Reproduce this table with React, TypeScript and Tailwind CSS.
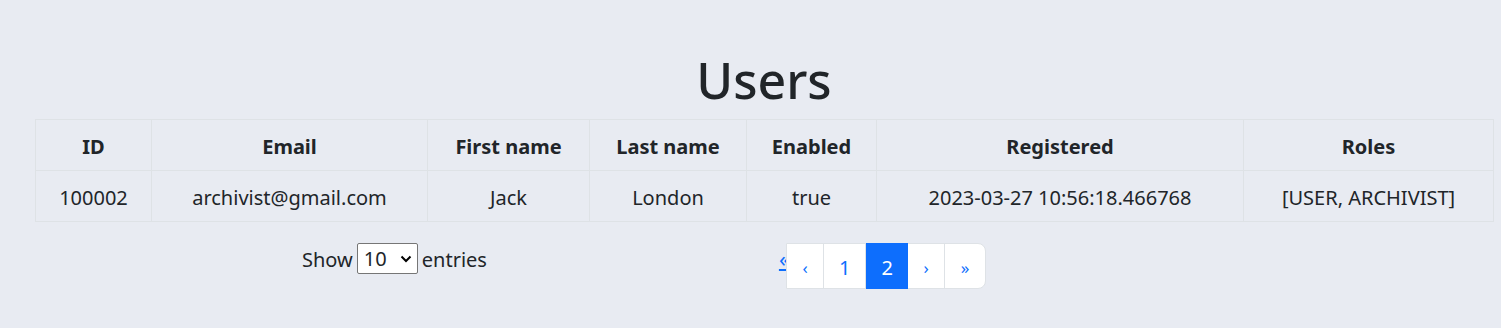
import React from 'react';

interface User {
  id: number;
  email: string;
  firstName: string;
  lastName: string;
  enabled: boolean;
  registered: string;
  roles: string[];
}

const columns = [
  { label: 'ID', width: 'w-[116px]' },
  { label: 'Email', width: 'w-[276px]' },
  { label: 'First name', width: 'w-[162px]' },
  { label: 'Last name', width: 'w-[157px]' },
  { label: 'Enabled', width: 'w-[130px]' },
  { label: 'Registered', width: 'w-[367px]' },
  { label: 'Roles', width: 'w-[250px]' },
];

const users: User[] = [
  {
    id: 100002,
    email: 'archivist@gmail.com',
    firstName: 'Jack',
    lastName: 'London',
    enabled: true,
    registered: '2023-03-27 10:56:18.466768',
    roles: ['USER', 'ARCHIVIST'],
  },
];

const cell = 'border border-[#dee2e6] px-[10px] pt-[12px] pb-[8px] text-center';

function Pagination() {
  const pages = [1, 2];
  const current = 2;
  return (
    <div className="flex items-start">
      <a href="#" className="text-[#0d6efd] underline text-[22px] leading-[24px] mt-[3px] mr-[-4px]">«</a>
      <ul className="relative flex bg-white rounded-r-[8px] border border-[#dee2e6] h-[46px]">
        <li className="w-[37px] flex items-center justify-center pt-[3px] text-[#0d6efd] text-[17px] border-r border-[#dee2e6]">‹</li>
        {pages.map((p) => (
          <li
            key={p}
            className={
              p === current
                ? 'w-[42px] flex items-center justify-center pt-[3px] bg-[#0d6efd] text-white text-[20px] -my-px'
                : 'w-[42px] flex items-center justify-center pt-[3px] text-[#0d6efd] text-[20px] border-r border-[#dee2e6]'
            }
          >
            {p}
          </li>
        ))}
        <li className="w-[37px] flex items-center justify-center pt-[3px] text-[#0d6efd] text-[17px] border-r border-[#dee2e6]">›</li>
        <li className="w-[40px] flex items-center justify-center pt-[3px] text-[#0d6efd] text-[17px]">»</li>
      </ul>
    </div>
  );
}

export default function App() {
  return (
    <main className="min-h-screen bg-[#e8ebf2] text-[#212529] font-['Noto_Sans',sans-serif] pl-[35px] pt-[50px]">
      <div className="w-[1458px]">
        <h1 className="text-center text-[50px] leading-[60px] font-medium mb-[9px]">Users</h1>

        <table className="w-full table-fixed border-collapse text-[20px] leading-[30px]">
          <colgroup>
            {columns.map((c) => (
              <col key={c.label} className={c.width} />
            ))}
          </colgroup>
          <thead>
            <tr>
              {columns.map((c) => (
                <th key={c.label} className={`${cell} font-bold`}>
                  {c.label}
                </th>
              ))}
            </tr>
          </thead>
          <tbody>
            {users.map((u) => (
              <tr key={u.id}>
                <td className={cell}>{u.id}</td>
                <td className={cell}>{u.email}</td>
                <td className={cell}>{u.firstName}</td>
                <td className={cell}>{u.lastName}</td>
                <td className={cell}>{String(u.enabled)}</td>
                <td className={cell}>{u.registered}</td>
                <td className={cell}>[{u.roles.join(', ')}]</td>
              </tr>
            ))}
          </tbody>
        </table>

        <div className="flex items-start mt-[21px]">
          <div className="flex items-center gap-[4px] ml-[267px] text-[20px] h-[31px] pt-[2px]">
            <span>Show</span>
            <div className="flex items-center justify-between w-[61px] h-[31px] bg-white border border-[#767676] rounded-[2px] pl-[6px] pr-[5px] -mt-[2px]">
              <span className="leading-none">10</span>
              <svg width="12" height="8" viewBox="0 0 12 8" fill="none" stroke="#000" strokeWidth="2">
                <path d="M1.5 1.5 L6 6 L10.5 1.5" />
              </svg>
            </div>
            <span>entries</span>
          </div>
          <div className="ml-[292px]">
            <Pagination />
          </div>
        </div>
      </div>
    </main>
  );
}
